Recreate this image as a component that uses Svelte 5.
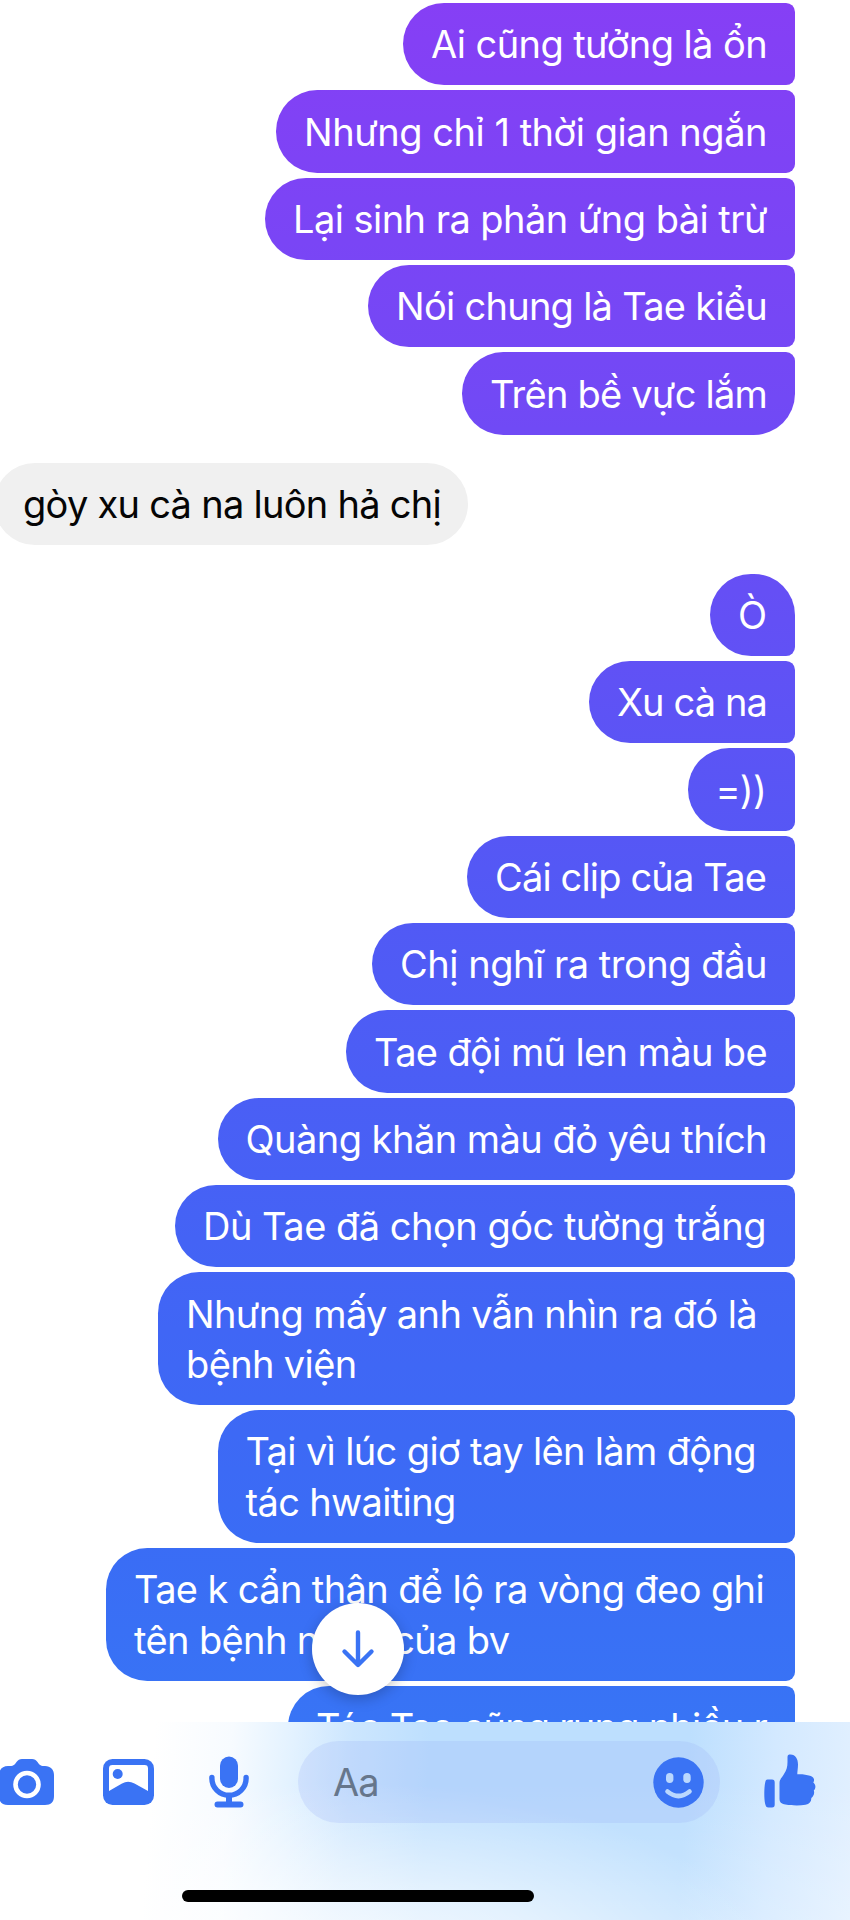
<script>
  // Outgoing and incoming bubbles, grouped by sender.
  const groups = [
    {
      from: 'me',
      items: [
        { w: 392, lines: ['Ai cũng tưởng là ổn'] },
        { w: 519, lines: ['Nhưng chỉ 1 thời gian ngắn'] },
        { w: 530, lines: ['Lại sinh ra phản ứng bài trừ'] },
        { w: 427, lines: ['Nói chung là Tae kiểu'] },
        { w: 333, lines: ['Trên bề vực lắm'] }
      ]
    },
    { from: 'them', items: [{ w: 474, lines: ['gòy xu cà na luôn hả chị'] }] },
    {
      from: 'me',
      items: [
        { w: 85, lines: ['Ò'] },
        { w: 206, lines: ['Xu cà na'] },
        { w: 107.5, pad: 1, lines: ['=))'] },
        { w: 328, pad: 1, lines: ['Cái clip của Tae'] },
        { w: 423, lines: ['Chị nghĩ ra trong đầu'] },
        { w: 449, lines: ['Tae đội mũ len màu be'] },
        { w: 577.5, lines: ['Quàng khăn màu đỏ yêu thích'] },
        { w: 620, pad: 1, lines: ['Dù Tae đã chọn góc tường trắng'] },
        { w: 637, pad: 10, lines: ['Nhưng mấy anh vẫn nhìn ra đó là', 'bệnh viện'] },
        { w: 577.5, pad: 11, lines: ['Tại vì lúc giơ tay lên làm động', 'tác hwaiting'] },
        { w: 689, pad: 3, lines: ['Tae k cẩn thận để lộ ra vòng đeo ghi', 'tên bệnh nhân của bv'] },
        { w: 507, lines: ['Tóc Tae cũng rụng nhiều r'] }
      ]
    }
  ];

  // Tracks the text so its first line fills the bubble's inner width.
  function fit(node, item) {
    const inner = item.w - 56 - (item.pad ?? 0);
    const first = node.firstElementChild;
    const natural = first.getBoundingClientRect().width;
    node.style.letterSpacing = `${(inner - natural) / item.lines[0].length}px`;
  }
</script>

<main class="screen">
  <section class="thread">
    {#each groups as group}
      <div class="group {group.from}">
        {#each group.items as item}
          <div class="bubble" style="width: {item.w}px" use:fit={item}>
            {#each item.lines as line}<span class="line">{line}</span>{/each}
          </div>
        {/each}
      </div>
    {/each}
  </section>

  <button class="jump" aria-label="Scroll down">
    <svg width="36" height="40" viewBox="0 0 36 40" fill="none" stroke="#3a73f4" stroke-width="4.400" stroke-linecap="round" stroke-linejoin="round">
      <path d="M18 3.500V35.500M4.500 22.500L18 36l13.500-13.500" />
    </svg>
  </button>

  <footer class="dock">
    <div class="composer">
      <svg class="camera" width="55" height="46" viewBox="0 0 55 46">
        <path fill="#3a73f4" d="M9 7H11C15 7 16 5 17.500 3C19 1 20.500 0 23 0H33C35.500 0 37 1 38.500 3C40 5 41 7 45 7H46C51.500 7 55 10.500 55 16V37C55 43 52 46 46 46H9C3 46 0 43 0 37V16C0 10.500 3.500 7 9 7Z" />
        <circle cx="28" cy="25.500" r="11.500" fill="none" stroke="#fff" stroke-width="4.600" />
      </svg>
      <svg class="photo" width="51" height="46" viewBox="0 0 51 46">
        <rect width="51" height="46" rx="9.500" fill="#3a73f4" />
        <path fill="#fff" d="M9.500 6H41.500C44 6 45 7 45 9.500V32L31.500 24.500Q25 21 19 24.500L6 32V9.500C6 7 7 6 9.500 6Z" />
        <circle cx="14.700" cy="15" r="5" fill="#3a73f4" />
      </svg>
      <svg class="mic" width="40" height="52" viewBox="0 0 40 52">
        <rect x="11" y="0.500" width="18" height="31.500" rx="9" fill="#3a73f4" />
        <path d="M2.900 21.500V22.500A17.100 16.800 0 0 0 37.100 22.500V21.500" fill="none" stroke="#3a73f4" stroke-width="5.400" stroke-linecap="round" />
        <path d="M17 40h6v5.500h8.500a3 3 0 0 1 0 6h-23a3 3 0 0 1 0-6H17z" fill="#3a73f4" />
      </svg>
      <div class="field">
        <span class="hint">Aa</span>
        <svg width="51" height="51" viewBox="0 0 51 51">
          <circle cx="25.500" cy="25.500" r="25.200" fill="#3a73f4" />
          <rect x="13" y="16" width="7.400" height="10" rx="3.700" fill="#bbd8fe" />
          <rect x="30.300" y="16" width="7.400" height="10" rx="3.700" fill="#bbd8fe" />
          <path d="M14.500 34.500Q25.500 43.500 36.500 34.500" fill="none" stroke="#bbd8fe" stroke-width="4.600" stroke-linecap="round" />
        </svg>
      </div>
      <svg class="like" width="52" height="54" viewBox="0 0 52 54" fill="#3a73f4">
        <path d="M3.500 25.500H8C10 25.500 10.700 26.500 10.700 28.500V50.500C10.700 52.500 10 53.500 8 53.500H4.500C2.500 53.500 1.800 52.500 1.200 50C0 45 0 34 1.200 28.500C1.600 26.500 2 25.500 3.500 25.500Z" />
        <path d="M15.500 29C15.500 25.500 18 23.500 20 20C22.500 16 23.500 13 23.500 8V3C23.500 1 24.500 0.500 26.500 0.500C31.500 0.500 34 5 34 10.500C34 14.500 33.300 17.500 33.300 20.300C38 20 42.500 20.700 46 21.700C50 22.800 51 26 49.300 28.500C52 30.500 52 34.500 49.800 36.500C50.800 39.500 49.500 42.500 47.300 44C47.500 47.500 45.500 50 41.500 50.800C35 51.800 26 51.500 20 50.200C17 49.500 15.500 48 15.500 45Z" />
      </svg>
    </div>
    <div class="home"></div>
  </footer>
</main>

<style>
  :global(body) {
    margin: 0;
    background: #fff;
  }
  .screen {
    position: relative;
    width: 850px;
    height: 1920px;
    overflow: hidden;
    display: flex;
    flex-direction: column;
    background: #fff;
    font-family: Inter, 'Liberation Sans', sans-serif;
  }
  .thread {
    box-sizing: border-box;
    flex: none;
    height: 1722px;
    overflow: hidden;
    padding: 3px 55px 0 0;
    display: flex;
    flex-direction: column;
    gap: 28.300px;
  }
  .group {
    display: flex;
    flex-direction: column;
    gap: 5.050px;
    align-items: flex-end;
  }
  .group.them {
    align-items: flex-start;
    margin-left: -6px;
  }
  .bubble {
    box-sizing: border-box;
    flex: none;
    padding: 16.300px 0 15.500px 28px;
    border-radius: 41.200px 9px 9px 41.200px;
    color: #fff;
    font-size: 38px;
    line-height: 50.500px;
    white-space: nowrap;
    background: linear-gradient(#863ff5 0, #7249f5 400px, #6350f5 620px, #5259f5 900px, #4860f5 1150px, #4066f5 1330px, #3a6cf5 1540px, #3874f5 1722px) fixed;
  }
  .line {
    display: block;
    width: max-content;
  }
  .me:first-child .bubble:last-child {
    border-bottom-right-radius: 41.200px;
  }
  .me:last-child .bubble:first-child {
    border-top-right-radius: 41.200px;
  }
  .them .bubble {
    padding-left: 29px;
    border-radius: 41.200px;
    background: #f0f0f0;
    color: #050505;
  }
  .jump {
    position: absolute;
    left: 312px;
    top: 1603px;
    width: 92px;
    height: 92px;
    padding: 0;
    border: 0;
    border-radius: 50%;
    background: #fff;
    box-shadow: 0 4px 14px rgba(0, 0, 0, 0.22);
    display: flex;
    align-items: center;
    justify-content: center;
  }
  .dock {
    position: relative;
    flex: 1;
    display: flex;
    flex-direction: column;
    background:
      radial-gradient(ellipse 440px 200px at 340px 260px, rgba(255, 255, 255, 0.85), rgba(255, 255, 255, 0.5) 50%, rgba(255, 255, 255, 0)),
      linear-gradient(rgba(255, 255, 255, 0) 30%, rgba(255, 255, 255, 0.2)),
      linear-gradient(94deg, #fff 18%, #f7fbff 27%, #e3f2ff 34%, #cce6fe 41%, #bddffe 50%, #bddffe 80%, #d3e9ff 90%, #e2f0ff 100%);
  }
  .composer {
    display: flex;
    align-items: center;
    height: 82px;
    margin-top: 19px;
  }
  .composer > svg {
    flex: none;
  }
  .camera {
    margin-left: -1px;
  }
  .photo {
    margin-left: 49px;
  }
  .mic {
    margin-left: 55px;
  }
  .field {
    box-sizing: border-box;
    width: 422px;
    height: 82px;
    margin-left: 49px;
    padding: 0 16px 0 35px;
    border-radius: 41px;
    background: rgba(150, 174, 246, 0.22);
    display: flex;
    align-items: center;
    justify-content: space-between;
  }
  .hint {
    font-size: 38px;
    letter-spacing: -1px;
    color: #66768b;
  }
  .like {
    margin-left: 44px;
    margin-top: -3px;
  }
  .home {
    width: 352px;
    height: 11.500px;
    margin: 67px 0 0 182px;
    border-radius: 6px;
    background: #000;
  }
</style>
